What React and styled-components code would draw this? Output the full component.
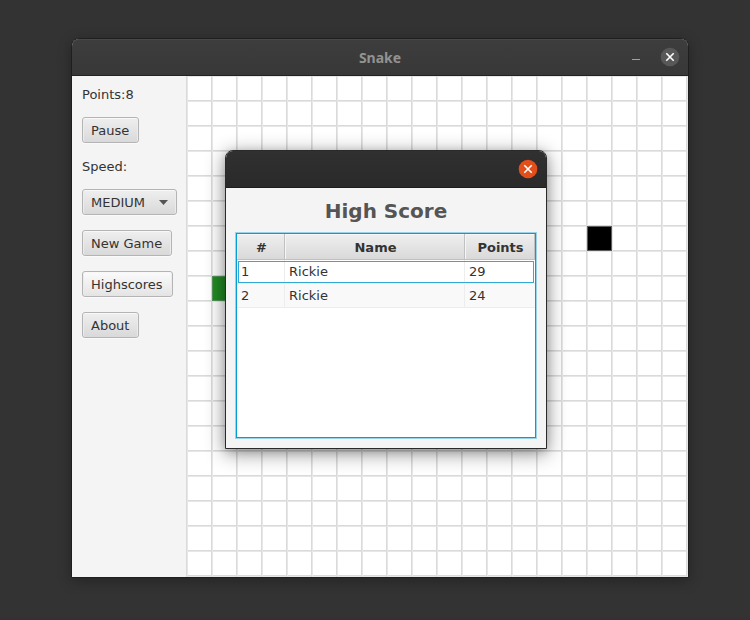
import React from "react";
import styled, { createGlobalStyle, css } from "styled-components";

const GlobalStyle = createGlobalStyle`
  *, *::before, *::after { box-sizing: border-box; }
  body {
    margin: 0;
    background: #333333;
    color: #333333;
    font: 13px/16px "DejaVu Sans", sans-serif;
  }
`;

const Desktop = styled.div`
  min-height: 100vh;
  padding: 38px 61px 38px 71px;
  border-bottom: 3px solid #382f33;
`;

const Window = styled.main`
  position: relative;
  border: 1px solid #1f1f1f;
  border-radius: 8px 8px 0 0;
  background: #f4f4f4;
  box-shadow: 0 3px 14px rgba(0, 0, 0, 0.3);
`;

const TitleBar = styled.header`
  display: grid;
  grid-template-columns: 1fr auto 1fr;
  align-items: center;
  height: 37px;
  padding: 0 8px;
  border-bottom: 1px solid #222222;
  border-radius: 7px 7px 0 0;
  background: linear-gradient(#3d3d3d, #383838);
  box-shadow: inset 0 1px #484848;
`;

const WindowTitle = styled.h1`
  grid-column: 2;
  margin: 0;
  padding-top: 2px;
  color: #929292;
  font: bold 14px/20px "Noto Sans", sans-serif;
`;

const WindowControls = styled.div`
  grid-column: 3;
  justify-self: end;
  display: flex;
  align-items: center;
  gap: 14px;
`;

const ControlButton = styled.button`
  display: block;
  width: 20px;
  height: 20px;
  padding: 0;
  border: 0;
  background: none;

  svg { display: block; }
`;

const Content = styled.div`
  display: flex;
`;

const Sidebar = styled.aside`
  display: flex;
  flex: 0 0 114px;
  flex-direction: column;
  align-items: flex-start;
  gap: 15px;
  padding: 10px 0 10px 10px;
`;

const controlFace = css`
  height: 26px;
  padding: 2px 9px 0 8px;
  border: 1px solid #b4b4b4;
  border-radius: 3px;
  color: #333333;
  font: inherit;
  background: linear-gradient(#efefef, #d9d9d9);
  box-shadow: inset 0 1px #f8f8f8, inset 1px 0 #ececec, inset -1px 0 #ececec, 0 1px #fafafa;
`;

const Button = styled.button`
  ${controlFace}
  ${({ $hovered }) => $hovered && "background: linear-gradient(#fbfbfb, #e4e4e4);"}
`;

const textLine = css`
  display: block;
  height: 16px;
  line-height: 18px;
`;

const Points = styled.div`
  ${textLine}
`;

const Label = styled.label`
  ${textLine}
`;

const SelectBox = styled.div`
  display: grid;
  align-items: center;
  width: 95px;

  > * { grid-area: 1 / 1; }

  svg {
    justify-self: end;
    margin-right: 9px;
    pointer-events: none;
  }
`;

const Select = styled.select`
  ${controlFace}
  width: 100%;
  appearance: none;
`;

const Board = styled.section`
  display: grid;
  flex: 1;
  grid-template: repeat(20, 25px) / repeat(20, 25px);
  padding: 0 1px 1px;
  background-color: #ffffff;
  background-image:
    linear-gradient(90deg, #dadada 0 1px, #e7e7e7 1px 2px, transparent 2px),
    linear-gradient(#dadada 0 1px, #e7e7e7 1px 2px, transparent 2px);
  background-size: 25px 25px;
  background-position: 0 -1px;
`;

const Cell = styled.div`
  grid-column: ${({ $col }) => $col};
  grid-row: ${({ $row }) => $row};
  border: 1px solid ${({ $edge }) => $edge};
  background: ${({ $fill }) => $fill};
`;

const Dialog = styled.section`
  position: absolute;
  top: 111px;
  left: 153px;
  width: 322px;
  border: 1px solid #2a2a2a;
  border-radius: 8px 8px 0 0;
  background: #f4f4f4;
  box-shadow: 0 4px 20px rgba(0, 0, 0, 0.45), 0 2px 8px rgba(0, 0, 0, 0.15);
`;

const DialogBar = styled.header`
  display: flex;
  justify-content: flex-end;
  align-items: center;
  height: 37px;
  padding-right: 8px;
  border-bottom: 1px solid #1d1d1d;
  border-radius: 7px 7px 0 0;
  background: linear-gradient(#303030, #2a2a2a);
`;

const DialogBody = styled.div`
  display: flex;
  flex-direction: column;
  gap: 10px;
  padding: 11px 10px 10px;
`;

const DialogTitle = styled.h2`
  margin: 0;
  color: #555555;
  font-size: 20px;
  line-height: 24px;
  text-align: center;
`;

const TableFrame = styled.div`
  min-height: 205px;
  border: 1px solid #039ed3;
  background: #ffffff;
  box-shadow: 0 0 0 1px #98d3e7;
`;

const ScoreTable = styled.table`
  width: 100%;
  border-collapse: separate;
  border-spacing: 0;
  table-layout: fixed;
`;

const HeadCell = styled.th`
  width: ${({ $width }) => $width};
  height: 26px;
  padding: 2px 0 0 2px;
  border-right: 1px solid #c0c0c0;
  border-bottom: 1px solid #c0c0c0;
  background: linear-gradient(#efefef, #d9d9d9);
  box-shadow: inset 1px 1px #f6f6f6;
`;

const Row = styled.tr`
  background: ${({ $selected }) => ($selected ? "#ffffff" : "#f9f9f9")};
  ${({ $selected }) => $selected && "outline: 1px solid #35a9d6; outline-offset: -2px;"}
`;

const ScoreCell = styled.td`
  height: 24px;
  padding: 0 4px;
  border-right: 1px solid #ededed;
  border-bottom: 1px solid #ededed;

  &:last-child { border-right: 0; }
`;

const CloseIcon = ({ fill }) => (
  <svg width="20" height="20" viewBox="0 0 20 20" aria-hidden="true">
    <circle cx="10" cy="10" r="9.3" fill={fill} />
    <path d="M6.3 6.3l7.4 7.4M13.7 6.3l-7.4 7.4" stroke="#fff" strokeWidth="1.6" />
  </svg>
);

const MinimizeIcon = () => (
  <svg width="20" height="20" viewBox="0 0 20 20" aria-hidden="true">
    <path d="M6 12.5h8" stroke="#a0a0a0" />
  </svg>
);

const scores = [
  { rank: 1, name: "Rickie", points: 29 },
  { rank: 2, name: "Rickie", points: 24 },
];

export default function App() {
  return (
    <>
      <GlobalStyle />
      <Desktop>
        <Window>
          <TitleBar>
            <WindowTitle>Snake</WindowTitle>
            <WindowControls>
              <ControlButton aria-label="Minimize"><MinimizeIcon /></ControlButton>
              <ControlButton aria-label="Close"><CloseIcon fill="#585858" /></ControlButton>
            </WindowControls>
          </TitleBar>
          <Content>
            <Sidebar>
              <Points>Points:8</Points>
              <Button>Pause</Button>
              <Label htmlFor="speed">Speed:</Label>
              <SelectBox>
                <Select id="speed" defaultValue="MEDIUM">
                  <option>MEDIUM</option>
                </Select>
                <svg width="9" height="5" viewBox="0 0 9 5" aria-hidden="true">
                  <path d="M0 0h9L4.5 5z" fill="#555" />
                </svg>
              </SelectBox>
              <Button>New Game</Button>
              <Button $hovered>Highscores</Button>
              <Button>About</Button>
            </Sidebar>
            <Board aria-label="Board">
              <Cell $col={2} $row={9} $fill="#228b22" $edge="#54955a" />
              <Cell $col={17} $row={7} $fill="#000000" $edge="#5c5c5c" />
            </Board>
          </Content>
          <Dialog role="dialog" aria-labelledby="score-title">
            <DialogBar>
              <ControlButton aria-label="Close high scores"><CloseIcon fill="#e34f1b" /></ControlButton>
            </DialogBar>
            <DialogBody>
              <DialogTitle id="score-title">High Score</DialogTitle>
              <TableFrame>
                <ScoreTable>
                  <thead>
                    <tr>
                      <HeadCell scope="col" $width="48px">#</HeadCell>
                      <HeadCell scope="col" $width="180px">Name</HeadCell>
                      <HeadCell scope="col">Points</HeadCell>
                    </tr>
                  </thead>
                  <tbody>
                    {scores.map((s, i) => (
                      <Row key={s.rank} $selected={i === 0}>
                        <ScoreCell>{s.rank}</ScoreCell>
                        <ScoreCell>{s.name}</ScoreCell>
                        <ScoreCell>{s.points}</ScoreCell>
                      </Row>
                    ))}
                  </tbody>
                </ScoreTable>
              </TableFrame>
            </DialogBody>
          </Dialog>
        </Window>
      </Desktop>
    </>
  );
}
